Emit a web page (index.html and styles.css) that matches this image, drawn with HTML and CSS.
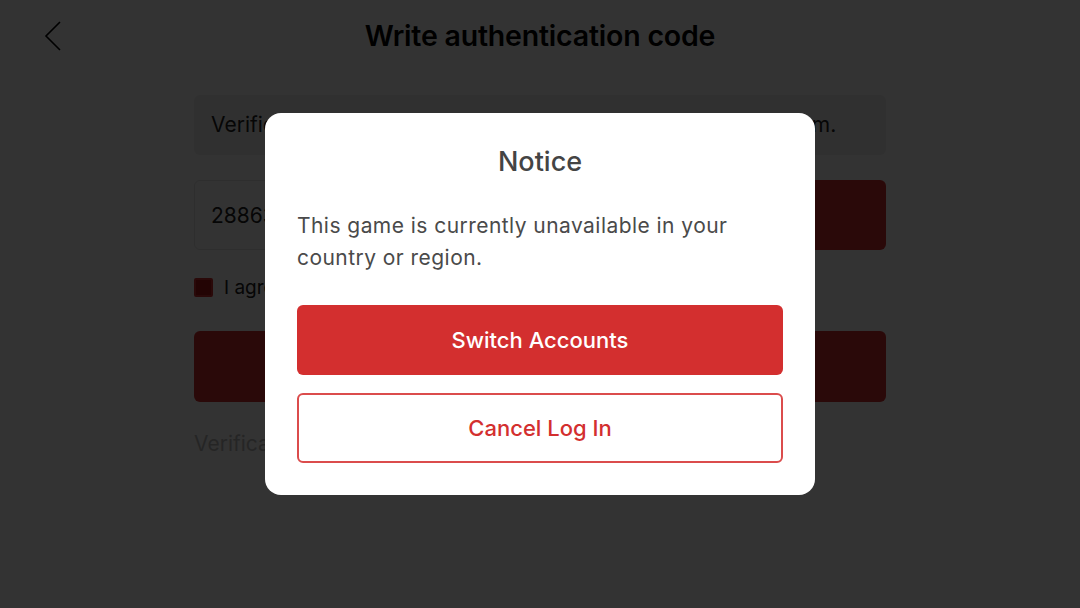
FILE: index.html
```html
<!DOCTYPE html>
<html lang="en">
<head>
    <meta charset="UTF-8">
    <meta name="viewport" content="width=device-width, initial-scale=1.0">
    <title>Write authentication code</title>
    <link rel="stylesheet" href="styles.css">
</head>
<body>
    <div class="page">
        <header class="topbar">
            <button class="back" aria-label="Back">
                <svg width="20" height="32" viewBox="0 0 20 32"><path d="M17 2 L3 16 L17 30" fill="none" stroke="#000" stroke-width="1.6"/></svg>
            </button>
            <h1>Write authentication code</h1>
        </header>

        <div class="form">
            <div class="info">Verification code has been sent to your email a***@gmail.com.</div>
            <div class="code-row">
                <input type="text" class="code" value="288634">
                <button class="send">Send</button>
            </div>
            <label class="agree">
                <span class="box"></span>
                I agree to the Terms of Service and Privacy Policy
            </label>
            <button class="submit">Log In</button>
            <p class="hint">Verification code expired?</p>
        </div>
    </div>

    <div class="overlay">
        <div class="modal">
            <h2>Notice</h2>
            <p>This game is currently unavailable in your country or region.</p>
            <button class="btn primary">Switch Accounts</button>
            <button class="btn outline">Cancel Log In</button>
        </div>
    </div>
</body>
</html>
```

FILE: styles.css
```css
body {
    font-family: Inter, "Noto Sans", sans-serif;
    margin: 0;
    background: #fff;
    color: #333;
}
.page {
    width: 1080px;
    height: 608px;
}
.topbar {
    position: relative;
    height: 70px;
    display: flex;
    align-items: center;
    justify-content: center;
}
.topbar h1 {
    margin: 0;
    font-size: 28.5px;
    font-weight: 600;
    color: #000;
    letter-spacing: -0.2px;
}
.back {
    position: absolute;
    left: 43px;
    top: 20px;
    background: none;
    border: 0;
    padding: 0;
}
.form {
    width: 692px;
    margin: 25px auto 0;
}
.info {
    height: 60px;
    line-height: 60px;
    background: #f0f0f0;
    border-radius: 6px;
    padding: 0 17px;
    font-size: 21px;
    color: #222;
    white-space: nowrap;
    overflow: hidden;
}
.code-row {
    display: flex;
    margin-top: 25px;
    gap: 10px;
}
.code {
    flex: 1;
    height: 70px;
    box-sizing: border-box;
    border: 1px solid #e4e4e4;
    border-radius: 6px;
    padding: 0 16px;
    font-family: inherit;
    font-size: 21px;
    color: #222;
}
.send {
    width: 220px;
    height: 70px;
    border: 0;
    border-radius: 6px;
    background: #d32f2f;
    color: #fff;
    font-family: inherit;
    font-size: 20px;
}
.agree {
    display: flex;
    align-items: center;
    gap: 11px;
    margin-top: 26px;
    font-size: 19px;
    color: #222;
}
.box {
    width: 15px;
    height: 15px;
    border: 2px solid #d32f2f;
    background: #b11818;
    border-radius: 2px;
}
.submit {
    display: block;
    width: 100%;
    height: 71px;
    margin-top: 32px;
    border: 0;
    border-radius: 6px;
    background: #d32f2f;
    color: #fff;
    font-family: inherit;
    font-size: 21px;
}
.hint {
    margin: 29px 0 0;
    font-size: 21px;
    color: #bbb;
}

.overlay {
    position: fixed;
    inset: 0;
    background: rgba(0, 0, 0, 0.8);
    display: flex;
    align-items: center;
    justify-content: center;
}
.modal {
    width: 550px;
    box-sizing: border-box;
    background: #fff;
    border-radius: 16px;
    padding: 33px 32px 32px;
    display: flex;
    flex-direction: column;
}
.modal h2 {
    margin: 0;
    text-align: center;
    font-size: 27px;
    line-height: 32px;
    font-weight: 500;
    color: #444;
}
.modal p {
    margin: 32px 0 31px;
    font-size: 21px;
    line-height: 32px;
    letter-spacing: 0.45px;
    color: #4a4a4a;
}
.btn {
    height: 70px;
    border-radius: 6px;
    font-family: inherit;
    font-size: 22px;
    font-weight: 500;
}
.primary {
    border: 0;
    background: #d32f2f;
    color: #fff;
}
.outline {
    margin-top: 18px;
    border: 2px solid #db4c4c;
    background: #fff;
    color: #d32f2f;
}
```
